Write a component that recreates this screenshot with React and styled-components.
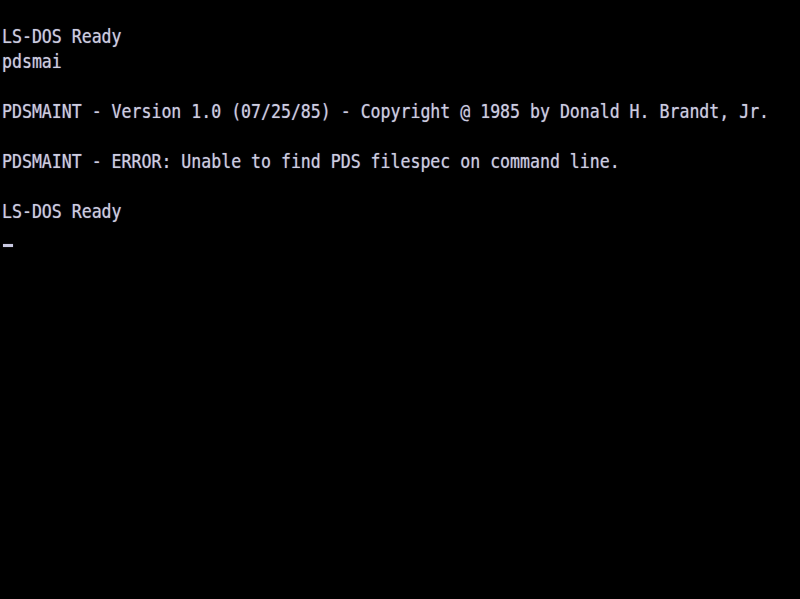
import React from 'react'
import styled, { createGlobalStyle } from 'styled-components'

const Global = createGlobalStyle`
  html, body {
    margin: 0;
    padding: 0;
    background: #000;
  }
`

const Screen = styled.div`
  width: 800px;
  height: 599px;
  background: #000;
  box-sizing: border-box;
  padding: 25px 0 0 2px;
  overflow: hidden;
`

const Row = styled.div`
  height: 24.96px;
  display: flex;
  align-items: flex-start;
`

const Text = styled.span`
  display: inline-block;
  font-family: "DejaVu Sans Mono", "Liberation Mono", monospace;
  font-size: 16.56px;
  line-height: 20.8px;
  white-space: pre;
  color: #cdcde0;
  text-shadow: 0 0 1px rgba(200, 200, 235, 0.55);
  transform: scaleY(1.2);
  transform-origin: top left;
`

const Cursor = styled.span`
  display: block;
  width: 10px;
  height: 3px;
  margin: 19px 0 0 1px;
  background: #c8c8e0;
  box-shadow: 0 0 1px rgba(200, 200, 235, 0.6);
`

const lines = [
  'LS-DOS Ready',
  'pdsmai',
  '',
  'PDSMAINT - Version 1.0 (07/25/85) - Copyright @ 1985 by Donald H. Brandt, Jr.',
  '',
  'PDSMAINT - ERROR: Unable to find PDS filespec on command line.',
  '',
  'LS-DOS Ready',
]

export default function App() {
  return (
    <>
      <Global />
      <Screen>
        {lines.map((l, i) => (
          <Row key={i}>
            <Text>{l}</Text>
          </Row>
        ))}
        <Row>
          <Cursor />
        </Row>
      </Screen>
    </>
  )
}
